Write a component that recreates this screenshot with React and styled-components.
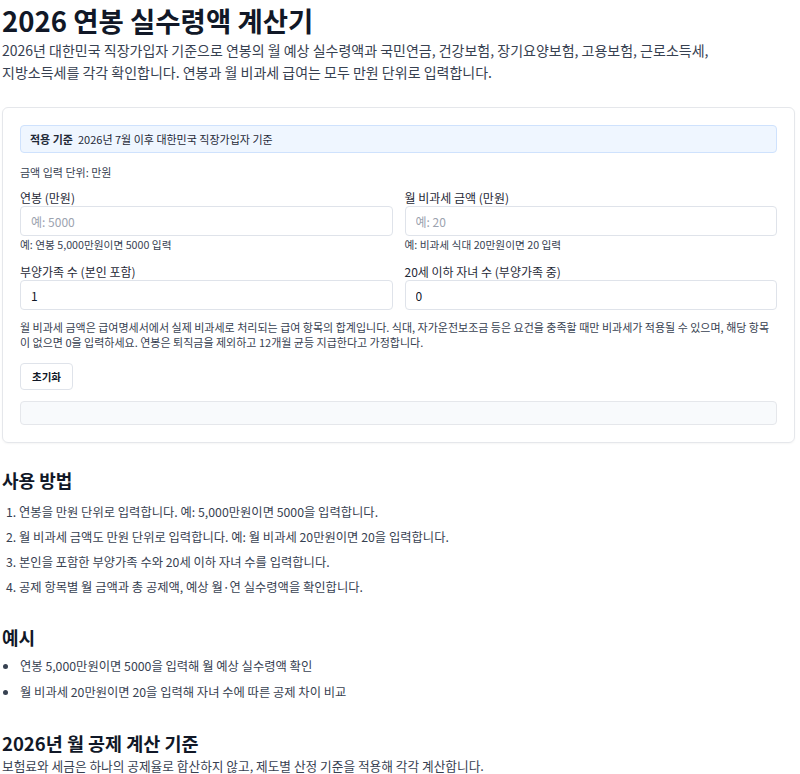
import React, { useState } from "react";
import styled, { createGlobalStyle } from "styled-components";

const GlobalStyle = createGlobalStyle`
  * { box-sizing: border-box; }
  body {
    margin: 0;
    background: #fff;
    color: #1f2937;
    font-family: "Noto Sans CJK KR", "Noto Sans", sans-serif;
  }
`;

const Page = styled.main`
  width: 793px;
  margin-left: 2px;
  padding-top: 1px;
`;

const Title = styled.h1`
  margin: 0;
  font-size: 27.5px;
  line-height: 38px;
  font-weight: 700;
  color: #111827;
`;

const Lead = styled.p`
  margin: 0 0 24px;
  font-size: 14px;
  line-height: 22px;
  color: #374151;
  max-width: 760px;
  word-break: keep-all;
`;

const Card = styled.section`
  border: 1px solid #e5e7eb;
  border-radius: 6px;
  padding: 17px;
  box-shadow: 0 1px 2px rgba(0, 0, 0, 0.04);
`;

const Notice = styled.div`
  background: #eff6ff;
  border: 1px solid #cfe2fd;
  border-radius: 4px;
  height: 28px;
  padding: 0 9px;
  display: flex;
  align-items: center;
  gap: 5px;
  font-size: 11px;
  color: #1f2937;

  strong { font-weight: 700; }
`;

const Unit = styled.div`
  margin-top: 11px;
  font-size: 11px;
  line-height: 16px;
  color: #374151;
`;

const Grid = styled.div`
  display: grid;
  grid-template-columns: 1fr 1fr;
  column-gap: 12px;
  row-gap: 12px;
  margin-top: 10px;
`;

const Field = styled.label`
  display: flex;
  flex-direction: column;
`;

const Label = styled.span`
  font-size: 12px;
  line-height: 16px;
  color: #1f2937;
`;

const Input = styled.input`
  height: 30px;
  border: 1px solid #dfe3ea;
  border-radius: 4px;
  padding: 0 10px;
  font: inherit;
  font-size: 12px;
  color: #111827;
  outline: none;

  &::placeholder { color: #9ca3af; }
`;

const Hint = styled.span`
  margin-top: 2px;
  font-size: 10.7px;
  line-height: 14px;
  color: #374151;
`;

const Note = styled.p`
  margin: 10px 0 0;
  font-size: 11px;
  line-height: 15px;
  color: #374151;
`;

const ResetButton = styled.button`
  margin-top: 13px;
  height: 27px;
  padding: 0 11px;
  border: 1px solid #dfe3ea;
  border-radius: 4px;
  background: #fff;
  font: inherit;
  font-size: 10.5px;
  font-weight: 700;
  color: #111827;
`;

const Result = styled.div`
  margin-top: 11px;
  height: 24px;
  border: 1px solid #e5e7eb;
  border-radius: 4px;
  background: #f8fafc;
`;

const SectionTitle = styled.h2`
  margin: ${(p) => p.$top}px 0 0;
  font-size: ${(p) => p.$size || 18}px;
  line-height: ${(p) => p.$lh || 24}px;
  font-weight: 700;
  color: #111827;
`;

const List = styled.ol`
  margin: ${(p) => (p.$bullet ? 4 : 8)}px 0 0;
  padding-left: 17px;
  font-size: 12.3px;
  line-height: 25px;
  color: #374151;
  list-style: ${(p) => (p.$bullet ? "disc" : "decimal")};

  li { padding-left: ${(p) => (p.$bullet ? 1 : 0)}px; line-height: ${(p) => (p.$bullet ? 26 : 25)}px; }
  li::marker { color: #374151; }
`;

const Plain = styled.p`
  margin: 0;
  font-size: 12.7px;
  line-height: 19px;
  color: #374151;
`;

export default function App() {
  const [salary, setSalary] = useState("");
  const [taxFree, setTaxFree] = useState("");
  const [family, setFamily] = useState("1");
  const [kids, setKids] = useState("0");

  const reset = () => {
    setSalary("");
    setTaxFree("");
    setFamily("1");
    setKids("0");
  };

  return (
    <>
      <GlobalStyle />
      <Page>
        <Title>2026 연봉 실수령액 계산기</Title>
        <Lead>
          2026년 대한민국 직장가입자 기준으로 연봉의 월 예상 실수령액과 국민연금, 건강보험, 장기요양보험, 고용보험, 근로소득세,
          지방소득세를 각각 확인합니다. 연봉과 월 비과세 급여는 모두 만원 단위로 입력합니다.
        </Lead>

        <Card>
          <Notice>
            <strong>적용 기준</strong>
            <span>2026년 7월 이후 대한민국 직장가입자 기준</span>
          </Notice>
          <Unit>금액 입력 단위: 만원</Unit>

          <Grid>
            <Field>
              <Label>연봉 (만원)</Label>
              <Input placeholder="예: 5000" value={salary} onChange={(e) => setSalary(e.target.value)} />
              <Hint>예: 연봉 5,000만원이면 5000 입력</Hint>
            </Field>
            <Field>
              <Label>월 비과세 금액 (만원)</Label>
              <Input placeholder="예: 20" value={taxFree} onChange={(e) => setTaxFree(e.target.value)} />
              <Hint>예: 비과세 식대 20만원이면 20 입력</Hint>
            </Field>
            <Field>
              <Label>부양가족 수 (본인 포함)</Label>
              <Input value={family} onChange={(e) => setFamily(e.target.value)} />
            </Field>
            <Field>
              <Label>20세 이하 자녀 수 (부양가족 중)</Label>
              <Input value={kids} onChange={(e) => setKids(e.target.value)} />
            </Field>
          </Grid>

          <Note>
            월 비과세 금액은 급여명세서에서 실제 비과세로 처리되는 급여 항목의 합계입니다. 식대, 자가운전보조금 등은 요건을 충족할 때만 비과세가 적용될 수 있으며, 해당 항목이 없으면 0을 입력하세요. 연봉은 퇴직금을 제외하고 12개월 균등 지급한다고 가정합니다.
          </Note>

          <ResetButton type="button" onClick={reset}>초기화</ResetButton>
          <Result />
        </Card>

        <SectionTitle $top={25}>사용 방법</SectionTitle>
        <List>
          <li>연봉을 만원 단위로 입력합니다. 예: 5,000만원이면 5000을 입력합니다.</li>
          <li>월 비과세 금액도 만원 단위로 입력합니다. 예: 월 비과세 20만원이면 20을 입력합니다.</li>
          <li>본인을 포함한 부양가족 수와 20세 이하 자녀 수를 입력합니다.</li>
          <li>공제 항목별 월 금액과 총 공제액, 예상 월·연 실수령액을 확인합니다.</li>
        </List>

        <SectionTitle $top={25}>예시</SectionTitle>
        <List as="ul" $bullet>
          <li>연봉 5,000만원이면 5000을 입력해 월 예상 실수령액 확인</li>
          <li>월 비과세 20만원이면 20을 입력해 자녀 수에 따른 공제 차이 비교</li>
        </List>

        <SectionTitle $top={25} $size={18.5} $lh={26}>2026년 월 공제 계산 기준</SectionTitle>
        <Plain>보험료와 세금은 하나의 공제율로 합산하지 않고, 제도별 산정 기준을 적용해 각각 계산합니다.</Plain>
      </Page>
    </>
  );
}
